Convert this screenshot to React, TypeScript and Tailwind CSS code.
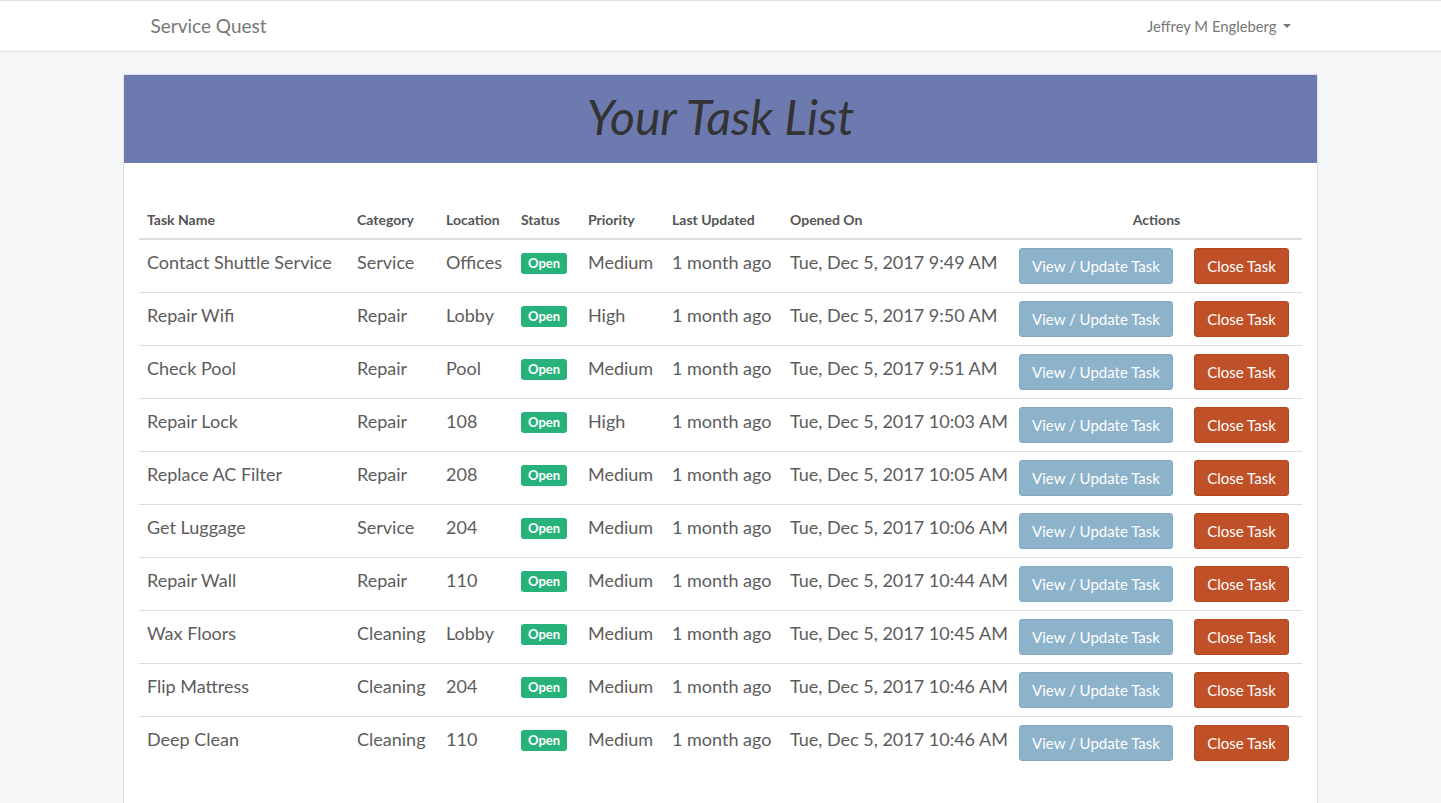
import React from "react";

const rows = [
  ["Contact Shuttle Service", "Service", "Offices", "Medium", "Tue, Dec 5, 2017 9:49 AM"],
  ["Repair Wifi", "Repair", "Lobby", "High", "Tue, Dec 5, 2017 9:50 AM"],
  ["Check Pool", "Repair", "Pool", "Medium", "Tue, Dec 5, 2017 9:51 AM"],
  ["Repair Lock", "Repair", "108", "High", "Tue, Dec 5, 2017 10:03 AM"],
  ["Replace AC Filter", "Repair", "208", "Medium", "Tue, Dec 5, 2017 10:05 AM"],
  ["Get Luggage", "Service", "204", "Medium", "Tue, Dec 5, 2017 10:06 AM"],
  ["Repair Wall", "Repair", "110", "Medium", "Tue, Dec 5, 2017 10:44 AM"],
  ["Wax Floors", "Cleaning", "Lobby", "Medium", "Tue, Dec 5, 2017 10:45 AM"],
  ["Flip Mattress", "Cleaning", "204", "Medium", "Tue, Dec 5, 2017 10:46 AM"],
  ["Deep Clean", "Cleaning", "110", "Medium", "Tue, Dec 5, 2017 10:46 AM"],
];

export default function App() {
  return (
    <div className="min-h-[803px] bg-[#f5f6f8] font-['Lato','Liberation_Sans',sans-serif] text-[#555]">
      <nav className="h-[52px] bg-white border-t border-b border-[#dde1e6] flex items-center">
        <div className="w-[1170px] mx-auto flex items-center justify-between px-[15px]">
          <span className="text-[19px] text-[#777]">Service Quest</span>
          <span className="text-[14.8px] text-[#777] flex items-center">
            Jeffrey M Engleberg
            <span className="ml-[6px] inline-block w-0 h-0 border-l-[4px] border-r-[4px] border-t-[4px] border-l-transparent border-r-transparent border-t-[#777]" />
          </span>
        </div>
      </nav>
      <div className="pt-[22px] pl-[123px] pr-[123px]">
        <div className="bg-white border border-[#dde1e6] rounded-t-[3px] h-[730px]">
          <div className="h-[88px] bg-[#6d7ab0] flex items-center justify-center">
            <h1 className="text-[48px] italic text-[#333] font-normal leading-none mb-[4px]">Your Task List</h1>
          </div>
          <div className="px-[15px] pt-[39px]">
            <table className="w-full border-collapse table-fixed">
              <colgroup>
                <col className="w-[210px]" />
                <col className="w-[89px]" />
                <col className="w-[75px]" />
                <col className="w-[67px]" />
                <col className="w-[84px]" />
                <col className="w-[118px]" />
                <col className="w-[229px]" />
                <col />
              </colgroup>
              <thead>
                <tr className="border-b-2 border-[#ddd] text-[14px] font-bold text-[#555]">
                  <th className="text-left px-[8px] py-[8px] leading-[20px]">Task Name</th>
                  <th className="text-left px-[8px] py-[8px] leading-[20px]">Category</th>
                  <th className="text-left px-[8px] py-[8px] leading-[20px]">Location</th>
                  <th className="text-left px-[8px] py-[8px] leading-[20px]">Status</th>
                  <th className="text-left px-[8px] py-[8px] leading-[20px]">Priority</th>
                  <th className="text-left px-[8px] py-[8px] leading-[20px]">Last Updated</th>
                  <th className="text-left px-[8px] py-[8px] leading-[20px]">Opened On</th>
                  <th className="text-center px-[8px] py-[8px] leading-[20px]">Actions</th>
                </tr>
              </thead>
              <tbody className="text-[18px] text-[#5c5c5c]">
                {rows.map((r, i) => (
                  <tr key={i} className={i > 0 ? "border-t border-[#ddd]" : ""}>
                    <td className="align-top px-[8px] pt-[9px] leading-[26px] whitespace-nowrap">{r[0]}</td>
                    <td className="align-top px-[8px] pt-[9px] leading-[26px] whitespace-nowrap">{r[1]}</td>
                    <td className="align-top px-[8px] pt-[9px] leading-[26px] whitespace-nowrap">{r[2]}</td>
                    <td className="align-top px-[8px] pt-[9px] leading-[26px]">
                      <span className="inline-block mt-[4px] bg-[#26b27a] text-white text-[13px] font-bold leading-[21px] h-[21px] px-[7px] rounded-[3px] align-top">Open</span>
                    </td>
                    <td className="align-top px-[8px] pt-[9px] leading-[26px] whitespace-nowrap">{r[3]}</td>
                    <td className="align-top px-[8px] pt-[9px] leading-[26px] whitespace-nowrap">1 month ago</td>
                    <td className="align-top px-[8px] pt-[9px] leading-[26px] whitespace-nowrap">{r[4]}</td>
                    <td className="align-top px-[8px] py-[8px]">
                      <div className="flex items-center">
                        <button className="h-[36px] w-[154px] bg-[#8db3cb] border border-[#82a9c2] rounded-[3px] text-white text-[15px]">View / Update Task</button>
                        <button className="ml-[21px] h-[36px] w-[95px] bg-[#c05028] border border-[#b3471f] rounded-[3px] text-white text-[15px]">Close Task</button>
                      </div>
                    </td>
                  </tr>
                ))}
              </tbody>
            </table>
          </div>
        </div>
      </div>
    </div>
  );
}
